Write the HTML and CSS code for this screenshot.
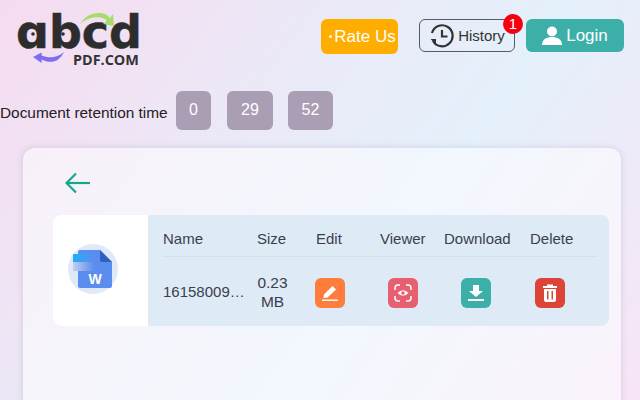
FILE: index.html
```html
<!DOCTYPE html>
<html lang="en">
<head>
<meta charset="utf-8">
<title>abcdPDF</title>
<link rel="stylesheet" href="styles.css">
</head>
<body>
<header class="topbar">
  <div class="logo">
    <span class="logo-word" role="img" aria-label="abcd">ɑbcd</span>
    <span class="logo-sub">PDF.COM</span>
    <svg class="logo-arrows" width="130" height="60" viewBox="0 0 130 60">
      <path d="M63 12 C70 -1 88 -2 93 6 L96 2 L97 14 L86 12 L90 8.500 C84 3.500 72 4 63 12 Z" fill="#a6dc6c"/>
      <path d="M47 40 C41 52 32 51 24.600 47.500 L24.600 51 L16 45 L24.600 40.600 L24.600 43.500 C32 46.500 40 46 47 40 Z" fill="#7f6cf0"/>
      <circle cx="16" cy="22" r="1.800" fill="#2d2d2d"/>
      <circle cx="46" cy="22" r="1.800" fill="#2d2d2d"/>
    </svg>
  </div>
  <div class="actions">
    <button class="btn rate"><span class="rate-dot"></span>Rate Us</button>
    <button class="btn history">
      <svg width="26" height="26" viewBox="0 0 26 26" fill="none" stroke="#333" stroke-width="2.2">
        <path d="M4 18 A10.500 10.500 0 1 0 3 10"/>
        <path d="M13 7 V13.500 H18.500"/>
        <path d="M1.500 16 H7 V21.500 Z" fill="#333" stroke="none"/>
      </svg>
      History
      <span class="badge">1</span>
    </button>
    <button class="btn login">
      <svg width="20" height="20" viewBox="0 0 20 20" fill="#fff">
        <circle cx="10" cy="5.500" r="5"/>
        <path d="M0 19 C0 13 5 11 10 11 C15 11 20 13 20 19 Z"/>
      </svg>
      Login
    </button>
  </div>
</header>

<section class="retention">
  <span class="retention-label">Document retention time</span>
  <span class="time t0">0</span>
  <span class="time t1">29</span>
  <span class="time t2">52</span>
</section>

<main class="card">
  <svg class="back" width="26" height="22" viewBox="0 0 26 22" fill="none" stroke="#14a88a" stroke-width="2.200">
    <path d="M25 11 H2"/>
    <path d="M11 1.500 L1.500 11 L11 20.500"/>
  </svg>
  <div class="file-row">
    <div class="file-thumb">
      <svg width="50" height="50" viewBox="0 0 50 50">
        <defs>
          <linearGradient id="bar1"><stop offset="0" stop-color="#1fb0f5"/><stop offset="1" stop-color="#5b8def"/></linearGradient>
          <linearGradient id="bar2"><stop offset="0" stop-color="#c5cdf0"/><stop offset="1" stop-color="#5b8def"/></linearGradient>
        </defs>
        <circle cx="25" cy="25" r="25" fill="#dfe9f8"/>
        <path d="M12 6 H32 L44 18 V42 Q44 44 42 44 H12 Q10 44 10 42 V8 Q10 6 12 6 Z" fill="#5b8def"/>
        <path d="M32 6 L44 18 H34 Q32 18 32 16 Z" fill="#2f5fc0"/>
        <rect x="5" y="10" width="21" height="8" fill="url(#bar1)"/>
        <rect x="5" y="18" width="21" height="9" fill="url(#bar2)"/>
        <text x="27" y="40" class="w-mark" text-anchor="middle">W</text>
      </svg>
    </div>
    <div class="file-table">
      <div class="cols head">
        <span>Name</span><span>Size</span><span>Edit</span><span>Viewer</span><span>Download</span><span>Delete</span>
      </div>
      <div class="cols body">
        <span class="name">16158009…</span>
        <span class="size">0.23 MB</span>
        <span class="icon edit">
          <svg width="18" height="18" viewBox="0 0 18 18" fill="#fff"><path d="M3 10.500 L11.500 2 L15 5.500 L6.500 13.500 L2.500 14 Z"/><rect x="1" y="15.500" width="16" height="1.400"/></svg>
        </span>
        <span class="icon view">
          <svg width="20" height="20" viewBox="0 0 20 20" fill="none" stroke="#fff" stroke-width="1.500"><path d="M2 7 V5 Q2 2 5 2 H7 M13 2 H15 Q18 2 18 5 V7 M18 13 V15 Q18 18 15 18 H13 M7 18 H5 Q2 18 2 15 V13"/><path d="M4.500 10 Q10 4.500 15.500 10 Q10 15.500 4.500 10 Z" fill="#fff" stroke="none"/><circle cx="10" cy="10" r="1.800" fill="#e85f72" stroke="none"/></svg>
        </span>
        <span class="icon down">
          <svg width="18" height="18" viewBox="0 0 18 18" fill="#fff"><path d="M6 1 H12 V7 H16 L9 13 L2 7 H6 Z"/><rect x="1" y="15" width="16" height="2"/></svg>
        </span>
        <span class="icon del">
          <svg width="16" height="18" viewBox="0 0 16 18" fill="#fff"><path d="M5 0.500 H11 V2 H15 V4 H1 V2 H5 Z"/><path d="M2 5 H14 V16 Q14 18 12 18 H4 Q2 18 2 16 Z M5 7 V15.500 H6.500 V7 Z M9.500 7 V15.500 H11 V7 Z" fill-rule="evenodd"/></svg>
        </span>
      </div>
    </div>
  </div>
</main>
</body>
</html>
```

FILE: styles.css
```css
* { box-sizing: border-box; }
html, body { height: 100%; }
body {
  margin: 0;
  height: 400px;
  overflow: hidden;
  font-family: "Liberation Sans", Arial, sans-serif;
  color: #333;
  background: linear-gradient(125deg, #f6dbf0 0%, #ebe9f7 36%, #e4f0fb 62%, #f7e4f5 100%);
}
button { font-family: inherit; cursor: pointer; }

.topbar {
  display: flex;
  justify-content: space-between;
  height: 91px;
  padding: 19px 16px 0 17px;
}
.logo {
  position: relative;
  width: 124px;
  height: 56px;
  margin-top: -7px;
}
.logo-arrows { position: absolute; left: 0; top: 0; }
.logo-word {
  position: absolute;
  left: -1px;
  top: 5px;
  font: 700 46px/30px "DejaVu Sans", sans-serif;
  -webkit-text-stroke: 0.500px #2d2d2d;
  color: #2d2d2d;
  white-space: nowrap;
}
.logo-sub {
  position: absolute;
  left: 56px;
  top: 42px;
  font: 700 14.400px/12px "Open Sans", sans-serif;
  color: #333;
  white-space: nowrap;
}
.actions { display: flex; align-items: flex-start; }
.btn {
  display: flex;
  align-items: center;
  justify-content: center;
  height: 33px;
  padding: 0;
  border: 0;
  border-radius: 6px;
}
.rate {
  width: 77px;
  height: 35px;
  margin-right: 21px;
  padding-left: 6px;
  background: #ffae00;
  color: #fff;
  font-size: 17px;
}
.rate-dot {
  width: 3px;
  height: 3px;
  margin-right: 2px;
  border-radius: 50%;
  background: #fff;
}
.history {
  position: relative;
  width: 96px;
  margin-right: 11px;
  gap: 3px;
  background: transparent;
  border: 1.500px solid #555a64;
  color: #333;
  font-size: 15px;
}
.badge {
  position: absolute;
  top: -6px;
  right: -9px;
  width: 20px;
  height: 20px;
  border-radius: 50%;
  background: #f5000f;
  color: #fff;
  font-size: 15px;
  line-height: 19px;
  text-align: center;
}
.login {
  width: 98px;
  gap: 4px;
  background: #3cafa8;
  color: #fff;
  font-size: 17px;
}

.retention {
  display: flex;
  align-items: center;
  height: 39px;
  font-size: 16px;
}
.retention-label { width: 176px; margin-top: 4px; color: #222; font-size: 15.400px; white-space: nowrap; }
.time {
  display: flex;
  align-items: center;
  justify-content: center;
  height: 39px;
  padding-bottom: 2px;
  border-radius: 6px;
  background: #a99eb3;
  color: #fff;
}
.t0 { width: 35px; margin-right: 16px; }
.t1 { width: 46px; margin-right: 15px; }
.t2 { width: 45px; }

.card {
  height: 260px;
  margin: 18px 19px 0 23px;
  padding: 24px 12px 0 30px;
  border-radius: 12px 12px 0 0;
  background: rgba(255, 255, 255, 0.5);
  box-shadow: 0 0 6px rgba(130, 120, 150, 0.25);
}
.back { display: block; margin: 0 0 21px 12px; }
.file-row {
  display: flex;
  height: 111px;
  border-radius: 8px;
  background: #deeaf6;
}
.file-thumb {
  display: flex;
  align-items: center;
  width: 95px;
  padding: 0 0 4px 15px;
  border-radius: 8px 0 0 8px;
  background: #fff;
}
.w-mark { font: 700 14px "Liberation Sans", sans-serif; fill: #fff; }
.file-table { flex: 1; padding: 0 12px 0 15px; font-size: 15px; color: #3a3f4d; }
.cols {
  display: grid;
  grid-template-columns: 94px 59px 64px 64px 86px 1fr;
  align-items: center;
}
.head { height: 42px; border-bottom: 1px solid #d3e0ee; padding-top: 5px; }
.body { height: 69px; }
.name { white-space: nowrap; }
.size { width: 31px; text-align: center; line-height: 19px; font-size: 15.500px; }
.icon {
  display: flex;
  align-items: center;
  justify-content: center;
  width: 30px;
  height: 30px;
  margin-top: 3px;
  border-radius: 6px;
}
.edit { background: #ff7d3c; margin-left: -1px; }
.view { background: #e85f72; margin-left: 8px; }
.down { background: #3cafa8; margin-left: 17px; }
.del { background: #db4437; margin-left: 5px; }
```
